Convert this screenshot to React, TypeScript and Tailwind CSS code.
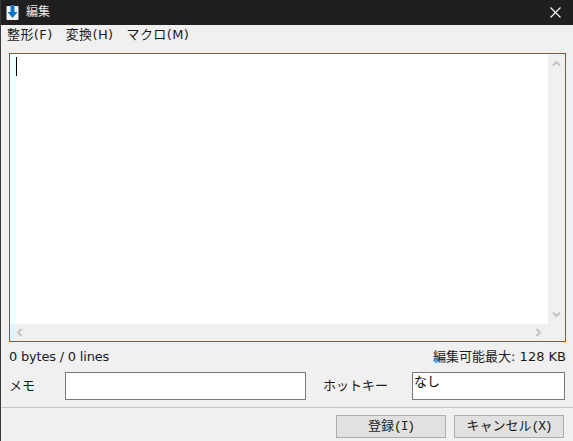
import React from 'react';

const font = { fontFamily: '"DejaVu Sans", "Noto Sans CJK JP", sans-serif' };

function Chevron({ d }: { d: string }) {
  return (
    <svg width="9" height="9" viewBox="0 0 9 9" fill="none" stroke="#c4c4c4" strokeWidth="2">
      <path d={d} />
    </svg>
  );
}

function Mono({ children }: { children: React.ReactNode }) {
  return <span className="font-['Liberation_Mono'] text-[13px] tracking-[-1.2px]">{children}</span>;
}

export default function App() {
  return (
    <div
      className="w-[573px] h-[441px] overflow-hidden flex flex-col bg-[#f0f0f0] border-l border-[#3a3a3a] text-[13px] text-[#1a1a1a]"
      style={font}
    >
      <div className="h-[25px] shrink-0 bg-[#1f1f1f] flex items-center pl-[5px] pr-[12px]">
        <svg width="13" height="17" viewBox="0 0 13 17">
          <rect x="0.5" y="2" width="12" height="14" rx="1" fill="#f2f2f2" />
          <path d="M4.5 1h4v7h3l-5 6-5-6h3z" fill="#0a74c8" />
        </svg>
        <span className="ml-[7px] -mt-[2px] text-[12px] text-[#e8e8e8] leading-none">編集</span>
        <svg className="ml-auto" width="11" height="11" viewBox="0 0 11 11" stroke="#ffffff" strokeWidth="1.1">
          <path d="M0.5 0.5l10 10M10.5 0.5l-10 10" />
        </svg>
      </div>

      <div className="h-[20px] shrink-0 flex items-center pl-[6px] pb-[2px] gap-[13px] leading-none tracking-[0.4px]">
        <span>整形(F)</span>
        <span>変換(H)</span>
        <span>マクロ(M)</span>
      </div>

      <div className="ml-[8px] mr-[7px] mt-[8px] h-[289px] shrink-0 border border-[#0078d7] bg-white flex flex-col">
        <div className="flex-1 flex min-h-0">
          <div className="flex-1 pl-[6px] pt-[3px]">
            <div className="w-px h-[19px] bg-black" />
          </div>
          <div className="w-[17px] bg-[#f0f0f0] flex flex-col items-center justify-between py-[5px]">
            <Chevron d="M1 6.5l3.5-3.5 3.5 3.5" />
            <Chevron d="M1 2.5l3.5 3.5 3.5-3.5" />
          </div>
        </div>
        <div className="h-[17px] shrink-0 bg-[#f0f0f0] flex items-center justify-between pl-[5px] pr-[22px]">
          <Chevron d="M6.5 1l-3.5 3.5 3.5 3.5" />
          <Chevron d="M2.5 1l3.5 3.5-3.5 3.5" />
        </div>
      </div>

      <div className="h-[30px] shrink-0 flex items-center justify-between pl-[8px] pr-[7px] pb-[1px] leading-none">
        <span className="tracking-[-0.2px]">0 bytes / 0 lines</span>
        <span>編集可能最大: 128 KB</span>
      </div>

      <div className="h-[28px] shrink-0 flex items-center pl-[8px] pr-[7px] leading-none">
        <span className="w-[56px] -mt-[2px]">メモ</span>
        <div className="w-[241px] h-[28px] border border-[#7a7a7a] bg-white" />
        <span className="ml-[17px] w-[89px] -mt-[2px]">ホットキー</span>
        <div className="w-[153px] h-[28px] border border-[#7a7a7a] bg-white pl-[1px] pt-0 leading-[18px] text-black">なし</div>
      </div>

      <div className="mt-[7px] h-px shrink-0 bg-[#c4c4c4]" />

      <div className="flex-1 flex items-start justify-end gap-[8px] pt-[7px] pr-[9px]">
        <button className="w-[110px] h-[23px] border border-[#adadad] bg-[#e1e1e1] leading-none pb-[1px]">登録<Mono>(I)</Mono></button>
        <button className="w-[110px] h-[23px] border border-[#adadad] bg-[#e1e1e1] leading-none pb-[1px]">キャンセル<Mono>(X)</Mono></button>
      </div>
    </div>
  );
}
